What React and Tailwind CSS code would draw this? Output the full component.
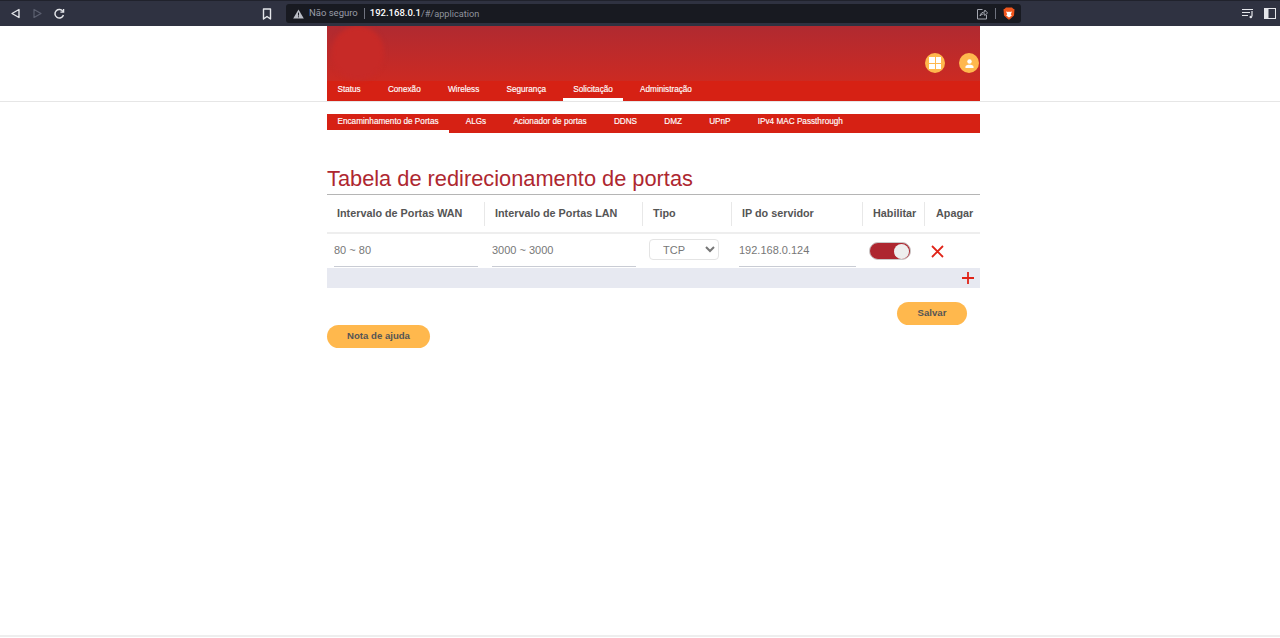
const NAV = ['Status', 'Conexão', 'Wireless', 'Segurança', 'Solicitação', 'Administração'];
const SUBNAV = ['Encaminhamento de Portas', 'ALGs', 'Acionador de portas', 'DDNS', 'DMZ', 'UPnP', 'IPv4 MAC Passthrough'];

/* ─── Browser toolbar ─────────────────────────────── */
const BrowserBar = () => (
  <div className="h-[26px] shrink-0 bg-[#2f3241] flex flex-col">
    <div className="h-px bg-[#20222c]" />
    <div className="flex-1 flex items-center relative">
      <div className="w-[286px] flex items-center shrink-0">
        <svg className="ml-[10px]" width="11" height="11" viewBox="0 0 11 11" fill="none" stroke="#e4e6ea" strokeWidth="1.4">
          <path d="M9 1.5v8L2 5.5z" strokeLinejoin="round" />
        </svg>
        <svg className="ml-[11px]" width="11" height="11" viewBox="0 0 11 11" fill="none" stroke="#5c6070" strokeWidth="1.2">
          <path d="M2 1.5v8l7-4z" strokeLinejoin="round" />
        </svg>
        <svg className="ml-[10px]" width="12" height="12" viewBox="0 0 12 12" fill="none" stroke="#e4e6ea" strokeWidth="1.5">
          <path d="M10 3.6A4.3 4.3 0 1 0 10.4 7" />
          <path d="M10.6 1v3.2H7.4" strokeWidth="1.3" />
        </svg>
        <svg className="ml-[197px]" width="10" height="12" viewBox="0 0 10 12" fill="none" stroke="#e4e6ea" strokeWidth="1.4">
          <path d="M1.5 1h7v10L5 8.5 1.5 11z" strokeLinejoin="round" />
        </svg>
      </div>
      <div className="w-[735px] h-[19px] bg-[#181a21] rounded-[3px] flex items-center font-['Roboto',sans-serif] text-[9.500px]">
        <svg className="ml-[7px]" width="11" height="10" viewBox="0 0 11 10">
          <path d="M5.5 0.5L10.8 9.6H0.2z" fill="#b9bcc4" />
          <rect x="5" y="3.6" width="1" height="3" fill="#181a21" />
          <rect x="5" y="7.3" width="1" height="1" fill="#181a21" />
        </svg>
        <span className="ml-[5px] text-[#9a9da8]">Não seguro</span>
        <span className="ml-[6px] w-px h-[11px] bg-[#70737f]" />
        <span className="ml-[5px] text-white font-medium">192.168.0.1</span>
        <span className="text-[#8f929d] text-[9.200px]">/#/application</span>
        <svg className="ml-auto" width="12" height="12" viewBox="0 0 12 12" fill="none" stroke="#a4a7b0" strokeWidth="1">
          <path d="M6.5 1.5h-5v9.5h9V7" />
          <path d="M4 8c.4-2.6 2.2-4 4.8-4V2l2.7 2.9-2.7 2.7V5.8C6.800 5.800 5.300 6.400 4 8z" />
        </svg>
        <span className="ml-[7px] w-px h-[11px] bg-[#70737f]" />
        <svg className="ml-[7px] mr-[6px]" width="12" height="13" viewBox="0 0 12 13">
          <path d="M3 .5h6l1.200 1.300 1.300.4-.5 6.300-3.800 3.500L6 12.700 4.800 12 1 8.500.5 2.200l1.300-.4z" fill="#f0561d" />
          <path d="M3 4.500l2.200.4.8-.4.8.4 2.200-.4-1.200 2.700 1 1.300L6 10.500 3.200 8.500l1-1.300z" fill="#fff" />
        </svg>
      </div>
      <svg className="ml-[221px]" width="12" height="11" viewBox="0 0 12 11" fill="none" stroke="#e4e6ea" strokeWidth="1.2">
        <path d="M0 1.500h11M0 4.500h8M0 7.500h6" />
        <path d="M10 3v5.500" />
        <circle cx="8.800" cy="9" r="1.300" fill="#e4e6ea" stroke="none" />
      </svg>
      <svg className="ml-[10px]" width="12" height="11" viewBox="0 0 12 11">
        <rect x=".5" y=".5" width="11" height="10" fill="none" stroke="#e4e6ea" />
        <rect x=".5" y=".5" width="4" height="10" fill="#e4e6ea" />
      </svg>
    </div>
  </div>
);

/* ─── Router header ─────────────────────────────── */
const Header = () => (
  <div className="border-b border-[#e6e6e6] h-[76px] shrink-0">
    <div className="w-[653px] ml-[327px] h-[75px] flex flex-col relative overflow-hidden">
      <div className="flex-1 bg-linear-to-b from-[#b02a30] to-[#cc2a22] flex items-center justify-end pt-[19px]">
        <div className="w-5 h-5 rounded-full bg-[#ffb84d] flex items-center justify-center mr-[14px]">
          <div className="grid grid-cols-2 gap-px w-[12px] h-[12px]">
            <div className="bg-white" />
            <div className="bg-white" />
            <div className="bg-white" />
            <div className="bg-white" />
          </div>
        </div>
        <div className="w-5 h-5 rounded-full bg-[#ffb84d] flex items-center justify-center mr-px">
          <svg width="9" height="9" viewBox="0 0 10 10" fill="#fff">
            <circle cx="5" cy="2.800" r="2.500" />
            <path d="M0.500 10V8.500C0.500 7 3 6.300 5 6.300S9.500 7 9.500 8.500V10z" />
          </svg>
        </div>
      </div>
      <div className="h-5 bg-[#d62114] flex text-white font-['Liberation_Sans',sans-serif] text-[8.200px] [-webkit-text-stroke:0.15px_white]">
        {NAV.map((n, i) => (
          <div key={n} className={`px-[10.500px] mr-[6.200px] flex items-center pt-px border-b-[3px] ${i === 4 ? 'border-white' : 'border-transparent'}`}>
            {n}
          </div>
        ))}
      </div>
      <div className="absolute left-[5px] top-0 w-[52px] h-[54px] rounded-full bg-[#c72a27] blur-[2px]" />
    </div>
  </div>
);

const SubNav = () => (
  <div className="mt-[12px] h-[19px] bg-[#d62114] flex text-white font-['Liberation_Sans',sans-serif] text-[8.200px] [-webkit-text-stroke:0.15px_white]">
    {SUBNAV.map((n, i) => (
      <div key={n} className={`px-[10.500px] mr-[6.200px] pt-px flex items-center border-b-[3px] ${i === 0 ? 'border-white' : 'border-transparent'}`}>
        {n}
      </div>
    ))}
  </div>
);

const COL_HEAD = 'flex items-center h-[24px] border-r border-[#e8e8e8] pl-[10px] shrink-0';
const FIELD = "h-[33px] bg-transparent border-b border-[#c9ccd4] text-[11px] text-[#777] outline-none font-['Liberation_Sans',sans-serif]";

/* ─── Port table ─────────────────────────────── */
const PortTable = () => (
  <div className="font-['Liberation_Sans',sans-serif]">
    <div className="h-[39px] border-b-2 border-[#eeeeee] flex items-center text-[10.800px] font-bold text-[#555]">
      <div className={`${COL_HEAD} w-[158px]`}>Intervalo de Portas WAN</div>
      <div className={`${COL_HEAD} w-[158px]`}>Intervalo de Portas LAN</div>
      <div className={`${COL_HEAD} w-[89px]`}>Tipo</div>
      <div className={`${COL_HEAD} w-[131px]`}>IP do servidor</div>
      <div className={`${COL_HEAD} w-[62px]`}>Habilitar</div>
      <div className="flex items-center pl-[11px]">Apagar</div>
    </div>
    <div className="h-[34px] flex items-start">
      <input readOnly value="80 ~ 80" className={`${FIELD} ml-[7px] w-[144px]`} />
      <input readOnly value="3000 ~ 3000" className={`${FIELD} ml-[14px] w-[144px]`} />
      <select defaultValue="TCP" className="ml-[13px] mt-[5px] w-[70px] h-[21px] border border-[#e4e4e4] rounded-[4px] bg-white text-[11px] text-[#777] pl-[9px] font-['Liberation_Sans',sans-serif] outline-none">
        <option>TCP</option>
      </select>
      <input readOnly value="192.168.0.124" className={`${FIELD} ml-[20px] w-[117px]`} />
      <div className="ml-[13px] mt-[8px] w-[42px] h-[18px] rounded-full bg-[#ae2730] border border-[#c9c9c9] flex items-center justify-end pr-px">
        <div className="w-[15px] h-[15px] rounded-full bg-[#eeeeee]" />
      </div>
      <svg className="ml-[20px] mt-[11px]" width="13" height="13" viewBox="0 0 13 13" stroke="#e02418" strokeWidth="1.800" fill="none">
        <path d="M1 1l11 11M12 1L1 12" />
      </svg>
    </div>
    <div className="h-5 bg-[#e7e9f1] flex items-center justify-end pr-[6px]">
      <svg width="12" height="12" viewBox="0 0 12 12" stroke="#e02418" strokeWidth="1.800" fill="none">
        <path d="M6 0v12M0 6h12" />
      </svg>
    </div>
  </div>
);

const Pill = ({ children, className }) => (
  <button className={`h-[23px] rounded-full bg-[#ffb84d] text-[#555] text-[9.600px] font-bold font-['Liberation_Sans',sans-serif] ${className}`}>
    {children}
  </button>
);

const App = () => (
  <div className="w-[1280px] h-[638px] bg-white flex flex-col overflow-hidden">
    <BrowserBar />
    <Header />
    <div className="flex-1 w-[653px] ml-[327px]">
      <SubNav />
      <h1 className="mt-[31px] h-[30px] leading-[30px] text-[21.800px] text-[#ae2730] font-['Liberation_Sans',sans-serif]">
        Tabela de redirecionamento de portas
      </h1>
      <div className="h-px bg-[#b5b5b5]" />
      <PortTable />
      <div className="flex justify-end mt-[14px] pr-[13px]">
        <Pill className="w-[70px]">Salvar</Pill>
      </div>
      <Pill className="w-[103px] block">Nota de ajuda</Pill>
    </div>
    <div className="h-[2px] mb-px bg-[#eeeeee] shrink-0" />
  </div>
);

export default App;
